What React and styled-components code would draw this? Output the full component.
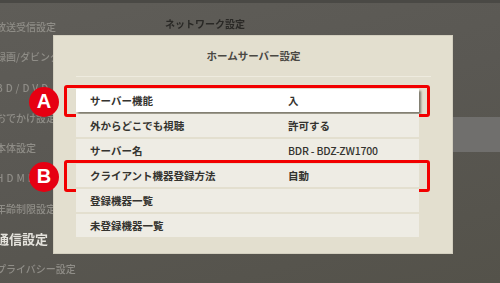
import React from "react";
import styled, { createGlobalStyle } from "styled-components";

const GlobalStyle = createGlobalStyle`
  body {
    margin: 0;
    background: #56544e;
  }
`;

const Screen = styled.div`
  position: relative;
  width: 500px;
  height: 283px;
  overflow: hidden;
  font-family: "Noto Sans CJK JP", "Noto Sans", sans-serif;
  background: linear-gradient(165deg, #5f5d58 0%, #5a5853 45%, #54524a 100%);
  border-top: 3px solid #4a4945;
  box-sizing: border-box;
`;

const Backdrop = styled.div`
  display: grid;
  grid-template-columns: 160px 1fr;
  height: 100%;
`;

const SideMenu = styled.ul`
  list-style: none;
  margin: 0 0 0 -4px;
  padding: 9px 0 0;
  filter: blur(0.5px);
`;

const SideItem = styled.li`
  height: 30.3px;
  line-height: 30.3px;
  white-space: nowrap;
  font-size: ${(p) => (p.$strong ? "13px" : "10px")};
  font-weight: ${(p) => (p.$strong ? 700 : 500)};
  color: ${(p) => (p.$strong ? "#e4e2dc" : "#8f8d87")};
  letter-spacing: ${(p) => (p.$wide ? "3px" : "0")};
`;

const MainColumn = styled.div`
  display: flex;
  flex-direction: column;
`;

const Heading = styled.div`
  margin: 13px 0 0 5px;
  line-height: 16px;
  font-size: 10px;
  font-weight: 700;
  color: #2a2926;
  filter: blur(0.3px);
`;

const Highlight = styled.div`
  margin-top: 85px;
  height: 35px;
  background: #706f6d;
`;

const Panel = styled.section`
  position: absolute;
  left: 53px;
  top: 32px;
  width: 400px;
  height: 219px;
  box-sizing: border-box;
  padding: 0 21px 0 22px;
  background: #e3dfcf;
  border: 1px solid #d3cfbf;
  display: flex;
  flex-direction: column;
`;

const Title = styled.h1`
  margin: 0;
  height: 40px;
  line-height: 40px;
  text-align: center;
  font-size: 10.5px;
  font-weight: 700;
  color: #4a4843;
`;

const Rule = styled.div`
  height: 1px;
  background: #eeebdf;
`;

const List = styled.div`
  display: flex;
  flex-direction: column;
  gap: 2px;
  width: 343px;
  margin-top: 12px;
`;

const Row = styled.div`
  position: relative;
  display: grid;
  grid-template-columns: 198px 1fr;
  align-items: center;
  height: 23px;
  padding-left: 14px;
  background: ${(p) => (p.$selected ? "#ffffff" : "#eeece4")};
  box-shadow: ${(p) => (p.$selected ? "2px 2px 2px rgba(40, 38, 30, 0.55)" : "none")};
  font-size: 10.5px;
  font-weight: 700;
  color: #34332f;
  white-space: nowrap;

  ${(p) =>
    p.$marked &&
    `
    &::after {
      content: "";
      position: absolute;
      left: -12px;
      right: -11px;
      top: -4px;
      bottom: -5px;
      border: 3px solid #f20000;
      border-radius: 3px;
      pointer-events: none;
    }
  `}
`;

const Value = styled.span`
  font-weight: ${(p) => (p.$latin ? 500 : 700)};
  letter-spacing: ${(p) => (p.$latin ? "-0.2px" : "0")};
`;

const Badge = styled.span`
  position: absolute;
  left: -47px;
  top: 50%;
  width: 30px;
  height: 30px;
  margin-top: -14px;
  border-radius: 50%;
  background: #e60012;
  color: #ffffff;
  display: flex;
  align-items: center;
  justify-content: center;
  font-family: "Liberation Sans", Arial, sans-serif;
  font-size: 20px;
  font-weight: 700;
  z-index: 1;
`;

const sideItems = [
  { text: "放送受信設定" },
  { text: "録画/ダビング" },
  { text: "BD/DVD", wide: true },
  { text: "おでかけ設定" },
  { text: "本体設定" },
  { text: "HDMI", wide: true },
  { text: "年齢制限設定" },
  { text: "通信設定", strong: true },
  { text: "プライバシー設定" },
];

const rows = [
  { label: "サーバー機能", value: "入", selected: true, mark: "A" },
  { label: "外からどこでも視聴", value: "許可する" },
  { label: "サーバー名", value: "BDR - BDZ-ZW1700", latin: true },
  { label: "クライアント機器登録方法", value: "自動", mark: "B" },
  { label: "登録機器一覧", value: "" },
  { label: "未登録機器一覧", value: "" },
];

export default function App() {
  return (
    <>
      <GlobalStyle />
      <Screen>
        <Backdrop>
          <SideMenu>
            {sideItems.map((item) => (
              <SideItem key={item.text} $strong={item.strong} $wide={item.wide}>
                {item.text}
              </SideItem>
            ))}
          </SideMenu>
          <MainColumn>
            <Heading>ネットワーク設定</Heading>
            <Highlight />
          </MainColumn>
        </Backdrop>

        <Panel>
          <Title>ホームサーバー設定</Title>
          <Rule />
          <List>
            {rows.map((row) => (
              <Row key={row.label} $selected={row.selected} $marked={!!row.mark}>
                {row.mark && <Badge>{row.mark}</Badge>}
                <span>{row.label}</span>
                <Value $latin={row.latin}>{row.value}</Value>
              </Row>
            ))}
          </List>
        </Panel>
      </Screen>
    </>
  );
}
